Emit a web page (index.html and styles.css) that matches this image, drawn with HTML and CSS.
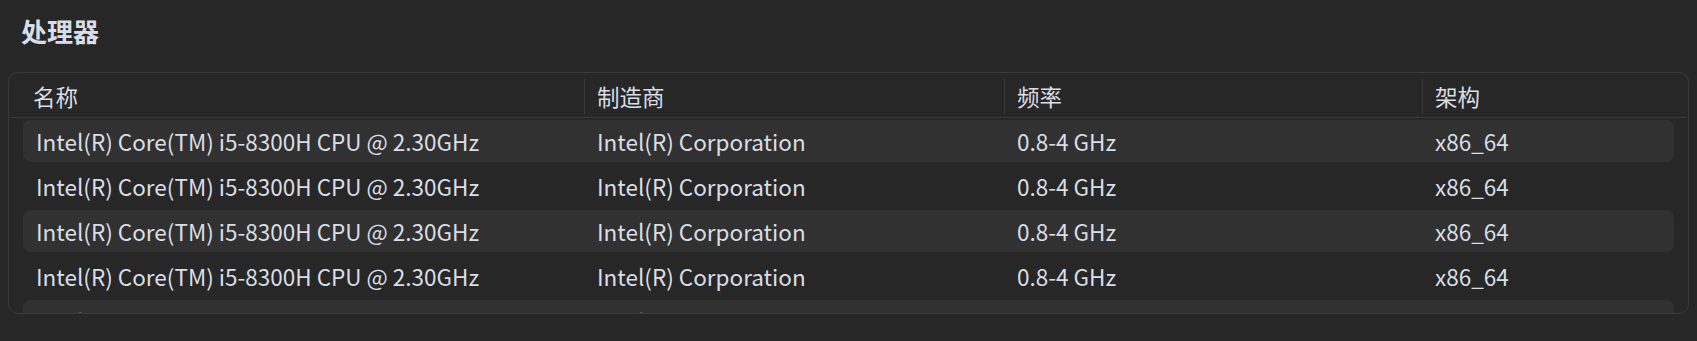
FILE: index.html
```html
<!DOCTYPE html>
<html lang="zh-CN">
<head>
<meta charset="utf-8">
<title>处理器</title>
<link rel="stylesheet" href="styles.css">
</head>
<body>
<div class="page">
  <h2 class="title">处理器</h2>
  <div class="card">
    <div class="thead">
      <div class="th first">名称</div>
      <div class="th">制造商</div>
      <div class="th">频率</div>
      <div class="th">架构</div>
    </div>
    <div class="tbody">
      <div class="row odd"><div class="td">Intel(R) Core(TM) i5-8300H CPU @ 2.30GHz</div><div class="td">Intel(R) Corporation</div><div class="td">0.8-4 GHz</div><div class="td">x86_64</div></div>
      <div class="row"><div class="td">Intel(R) Core(TM) i5-8300H CPU @ 2.30GHz</div><div class="td">Intel(R) Corporation</div><div class="td">0.8-4 GHz</div><div class="td">x86_64</div></div>
      <div class="row odd"><div class="td">Intel(R) Core(TM) i5-8300H CPU @ 2.30GHz</div><div class="td">Intel(R) Corporation</div><div class="td">0.8-4 GHz</div><div class="td">x86_64</div></div>
      <div class="row"><div class="td">Intel(R) Core(TM) i5-8300H CPU @ 2.30GHz</div><div class="td">Intel(R) Corporation</div><div class="td">0.8-4 GHz</div><div class="td">x86_64</div></div>
      <div class="row odd"><div class="td">Intel(R) Core(TM) i5-8300H CPU @ 2.30GHz</div><div class="td">Intel(R) Corporation</div><div class="td">0.8-4 GHz</div><div class="td">x86_64</div></div>
      <div class="row"><div class="td">Intel(R) Core(TM) i5-8300H CPU @ 2.30GHz</div><div class="td">Intel(R) Corporation</div><div class="td">0.8-4 GHz</div><div class="td">x86_64</div></div>
    </div>
  </div>
</div>
</body>
</html>
```

FILE: styles.css
```css
html, body {
  margin: 0;
  padding: 0;
  background: #272727;
}
body {
  font-family: "Noto Sans CJK SC", "Noto Sans", sans-serif;
  color: #d9dee6;
}
.page {
  padding: 0 8px;
}
.title {
  margin: 0;
  padding: 13px 0 0 13px;
  height: 72px;
  box-sizing: border-box;
  font-size: 26px;
  line-height: 36px;
  font-weight: 700;
}
.card {
  border: 1px solid #3a3a3a;
  border-radius: 10px;
  height: 242px;
  box-sizing: border-box;
  overflow: hidden;
}
.thead {
  display: grid;
  grid-template-columns: 564px 420px 418px 1fr;
  align-items: start;
  height: 45px;
  padding: 6px 1px 0 9px;
  margin: 0 1px 0 2px;
  box-sizing: border-box;
  border-bottom: 1px solid #3a3a3a;
}
.th {
  height: 35px;
  line-height: 35px;
  font-size: 22.5px;
  padding-left: 12px;
  border-left: 1px solid #3a3a3a;
}
.th.first {
  border-left: none;
  padding-left: 13px;
}
.tbody {
  display: flex;
  flex-direction: column;
  gap: 3px;
  padding: 2px 14px 0 14px;
}
.row {
  display: grid;
  grid-template-columns: 561px 420px 418px 1fr;
  align-items: center;
  height: 42px;
  flex: none;
  border-radius: 8px;
  font-size: 22.5px;
}
.row.odd {
  background: #313131;
}
.td {
  padding-left: 13px;
  white-space: nowrap;
}
```
